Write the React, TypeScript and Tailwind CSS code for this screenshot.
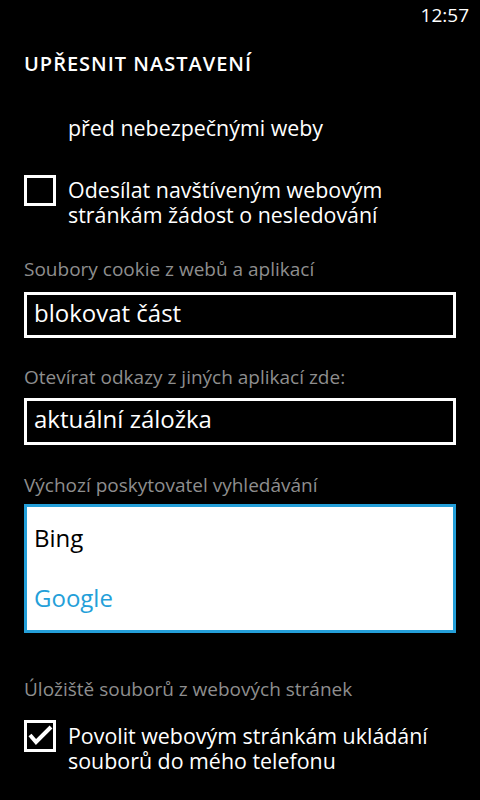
export default function App() {
  return (
    <div className="w-[480px] h-[800px] overflow-hidden bg-black text-white font-['Open_Sans',sans-serif]">
      {/* status bar */}
      <div className="h-[32px] flex justify-end pr-[11px] pt-[3px]">
        <span className="text-[19px] leading-[24px]">12:57</span>
      </div>

      <div className="mt-[20px] ml-[24px] text-[20px] leading-[24px] font-semibold tracking-[1px]">
        UPŘESNIT NASTAVENÍ
      </div>

      <div className="mt-[38px] ml-[68px] text-[21.4px] leading-[27px]">
        před nebezpečnými weby
      </div>

      {/* do not track */}
      <div className="mt-[34px] ml-[24px] flex items-start">
        <div className="w-[32px] h-[31px] border-[3px] border-white shrink-0" />
        <div className="ml-[12px] mt-[2px] text-[21.4px] leading-[25px]">
          <div>Odesílat navštíveným webovým</div>
          <div>stránkám žádost o nesledování</div>
        </div>
      </div>

      <div className="mt-[30px] ml-[24px] text-[19px] leading-[24px] text-[#8e8e8e]">
        Soubory cookie z webů a aplikací
      </div>
      <div className="mt-[11px] mx-[24px] h-[46px] border-[3px] border-white pl-[7px] pt-[3px] text-[24px] leading-[30px]">
        blokovat část
      </div>

      <div className="mt-[27px] ml-[24px] text-[19px] leading-[24px] text-[#8e8e8e]">
        Otevírat odkazy z jiných aplikací zde:
      </div>
      <div className="mt-[9px] mx-[24px] h-[47px] border-[3px] border-white pl-[7px] pt-[3px] text-[24px] leading-[30px]">
        aktuální záložka
      </div>

      <div className="mt-[28px] ml-[24px] text-[19px] leading-[24px] text-[#8e8e8e]">
        Výchozí poskytovatel vyhledávání
      </div>
      <div className="mt-[7px] mx-[24px] h-[129px] border-[3px] border-[#249fd9] bg-white pl-[7px] pt-[16px] text-[24px] leading-[30px]">
        <div className="text-black">Bing</div>
        <div className="mt-[30px] text-[#249fd9]">Google</div>
      </div>

      <div className="mt-[44px] ml-[24px] text-[19px] leading-[24px] text-[#8e8e8e]">
        Úložiště souborů z webových stránek
      </div>

      {/* local storage */}
      <div className="mt-[19px] ml-[24px] flex items-start">
        <div className="w-[32px] h-[32px] border-[3px] border-white shrink-0 flex items-center justify-center">
          <svg width="26" height="26" viewBox="0 0 26 26">
            <path d="M3 12 L9 19 L24 4" fill="none" stroke="white" strokeWidth="4" strokeLinejoin="miter" />
          </svg>
        </div>
        <div className="ml-[12px] mt-[3px] text-[21.4px] leading-[25px]">
          <div>Povolit webovým stránkám ukládání</div>
          <div>souborů do mého telefonu</div>
        </div>
      </div>
    </div>
  );
}
